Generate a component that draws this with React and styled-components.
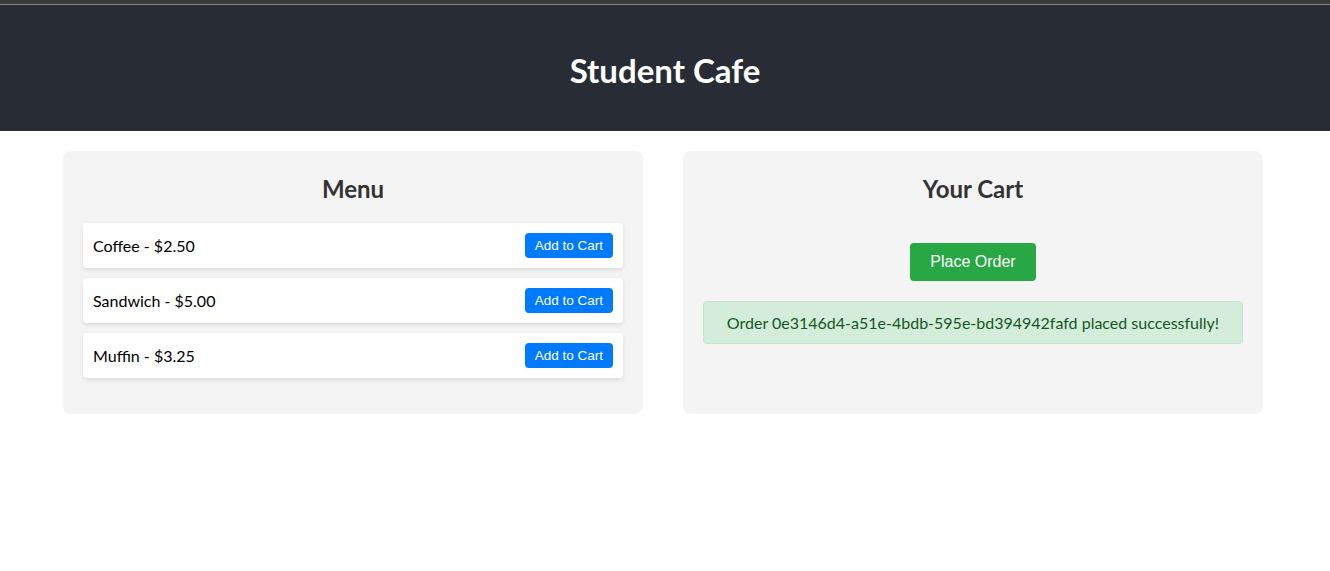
import React, { useState } from 'react';
import styled, { createGlobalStyle } from 'styled-components';

const GlobalStyle = createGlobalStyle`
    body {
        margin: 0;
        font-family: Lato, "Noto Sans", sans-serif;
        background-color: #ffffff;
    }
`

const TopStrip = styled.div`
    height: 4px;
    background-color: #3b3b3b;
    border-bottom: 1px solid #858585;
`

const Header = styled.header`
    background-color: #282c34;
    color: #ffffff;
    text-align: center;
    padding: 20px;
`

const Title = styled.h1`
    font-size: 33px;
    font-weight: 700;
    margin: 23px 0 19px 0;
    line-height: 44px;
`

const Main = styled.main`
    display: flex;
    justify-content: center;
    gap: 40px;
    padding: 20px 4px 20px 0;
`

const Panel = styled.section`
    width: 580px;
    box-sizing: border-box;
    background-color: #f4f4f4;
    border-radius: 8px;
    padding: 20px;
    display: flex;
    flex-direction: column;
    align-items: ${props => props.$center ? 'center' : 'stretch'};
`

const PanelTitle = styled.h2`
    margin: 2px 0 18px 0;
    font-size: 24px;
    line-height: 32px;
    font-weight: 700;
    color: #333333;
    text-align: center;
    align-self: stretch;
`

const ItemList = styled.ul`
    list-style: none;
    margin: 0 0 16px 0;
    padding: 0;
    display: flex;
    flex-direction: column;
    gap: 10px;
`

const Item = styled.li`
    background-color: #ffffff;
    border-radius: 4px;
    box-shadow: 0 2px 4px rgba(0, 0, 0, 0.1);
    padding: 10px;
    display: flex;
    align-items: center;
    justify-content: space-between;
    font-size: 16px;
    color: #000000;
`

const Button = styled.button`
    font-family: "Liberation Sans", Arial, sans-serif;
    color: #ffffff;
    border: none;
    border-radius: 4px;
    cursor: pointer;
    background-color: ${props => props.$variant === 'success' ? '#28a745' : '#007bff'};
    font-size: ${props => props.$variant === 'success' ? '16px' : '13.5px'};
    padding: ${props => props.$variant === 'success' ? '10px 20px' : '5px 10px'};
    line-height: ${props => props.$variant === 'success' ? '18px' : '15px'};
`

const PlaceOrder = styled(Button)`
    margin-top: 20px;
`

const Message = styled.div`
    align-self: stretch;
    margin-top: 20px;
    background-color: #d4edda;
    border: 1px solid #c3e6cb;
    color: #155724;
    border-radius: 4px;
    padding: 10px;
    text-align: center;
    font-size: 16px;
    line-height: 21px;
`

const menu = [
    {id: 1, name: 'Coffee', price: 2.5},
    {id: 2, name: 'Sandwich', price: 5},
    {id: 3, name: 'Muffin', price: 3.25},
]

const App = () => {
    const [cart, setCart] = useState([])
    const orderId = '0e3146d4-a51e-4bdb-595e-bd394942fafd'

    return (
        <>
            <GlobalStyle/>
            <TopStrip/>
            <Header>
                <Title>Student Cafe</Title>
            </Header>
            <Main>
                <Panel>
                    <PanelTitle>Menu</PanelTitle>
                    <ItemList>
                        {menu.map(item => (
                            <Item key={item.id}>
                                <span>{item.name} - ${item.price.toFixed(2)}</span>
                                <Button onClick={() => setCart([...cart, item])}>Add to Cart</Button>
                            </Item>
                        ))}
                    </ItemList>
                </Panel>
                <Panel $center>
                    <PanelTitle>Your Cart</PanelTitle>
                    <PlaceOrder $variant="success">Place Order</PlaceOrder>
                    <Message>Order {orderId} placed successfully!</Message>
                </Panel>
            </Main>
        </>
    )
}

export default App;
